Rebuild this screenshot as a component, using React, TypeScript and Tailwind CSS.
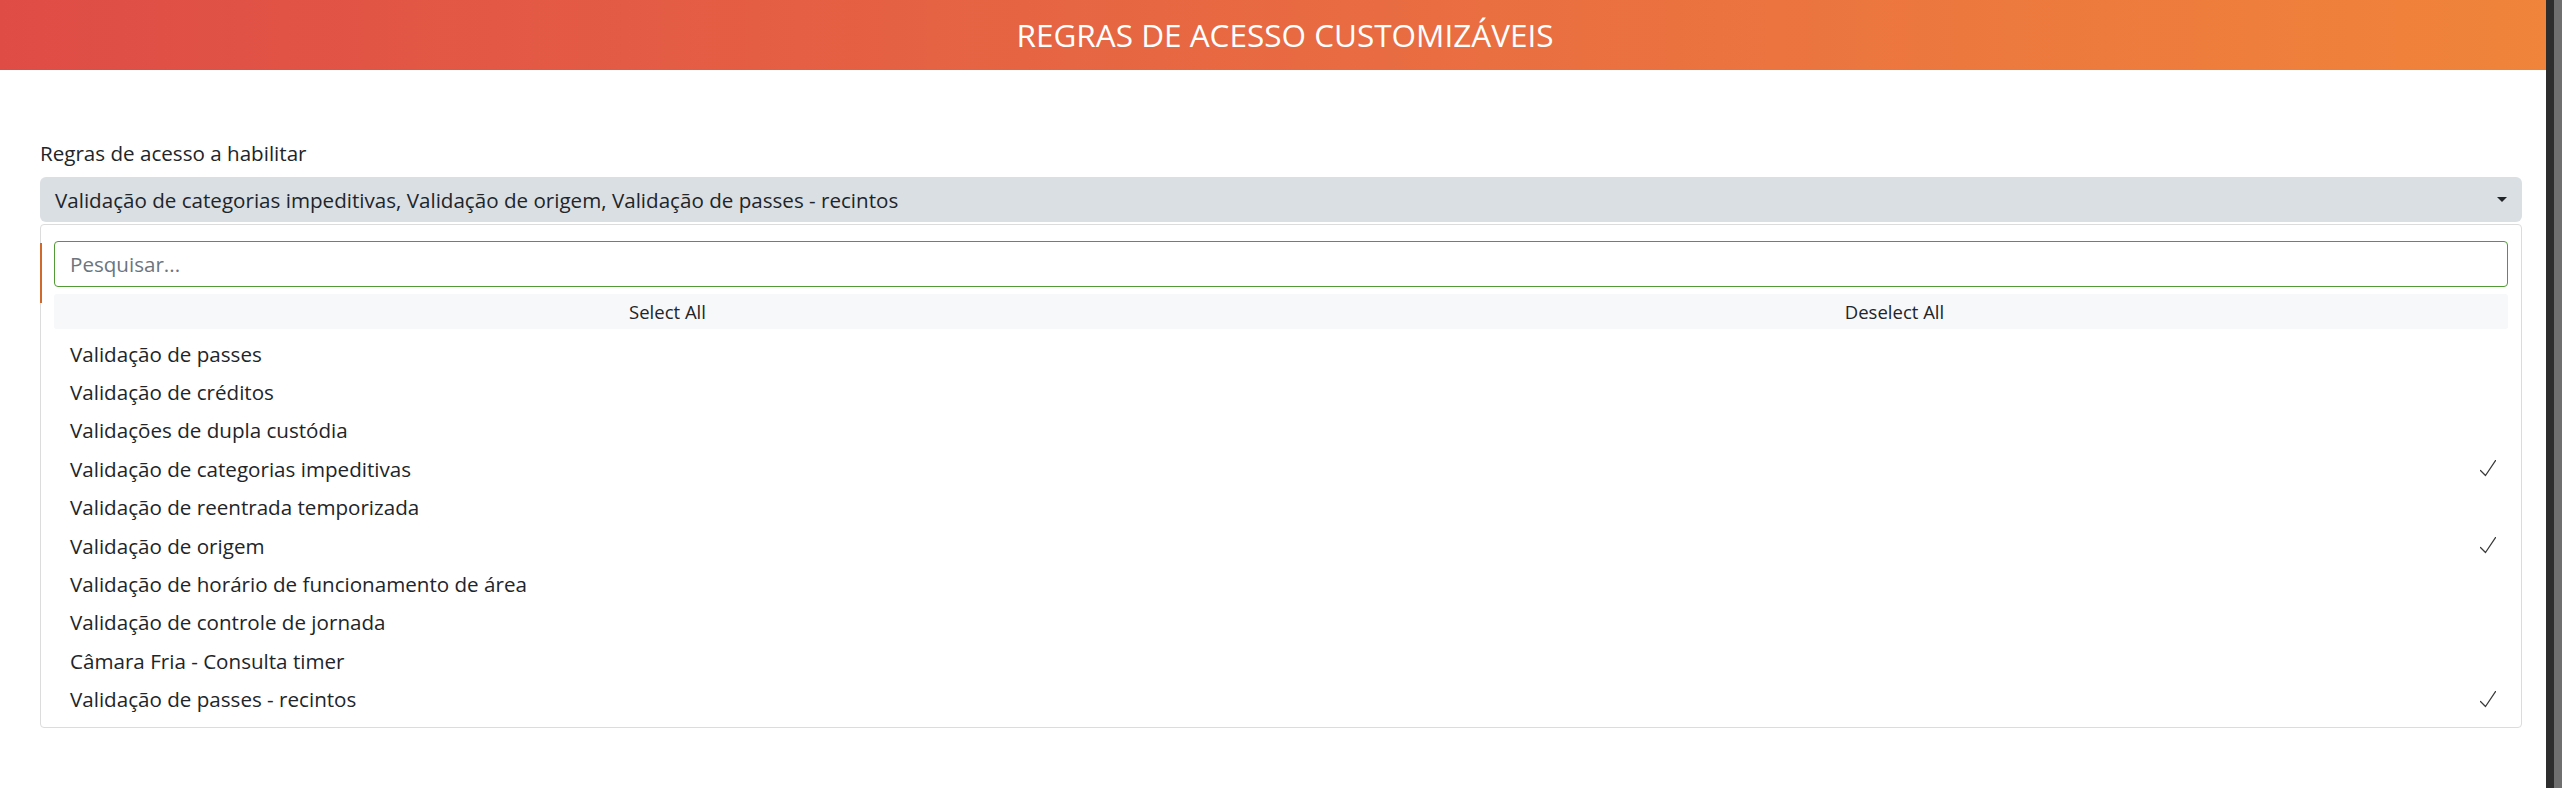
import React from 'react';

const rules = [
  { name: 'Validação de passes', checked: false },
  { name: 'Validação de créditos', checked: false },
  { name: 'Validações de dupla custódia', checked: false },
  { name: 'Validação de categorias impeditivas', checked: true },
  { name: 'Validação de reentrada temporizada', checked: false },
  { name: 'Validação de origem', checked: true },
  { name: 'Validação de horário de funcionamento de área', checked: false },
  { name: 'Validação de controle de jornada', checked: false },
  { name: 'Câmara Fria - Consulta timer', checked: false },
  { name: 'Validação de passes - recintos', checked: true },
];

function CheckMark() {
  return (
    <svg width="16" height="17" viewBox="0 0 16 17" fill="none">
      <polyline points="0.5,10.5 5.5,15.5 15.5,0.5" stroke="#3a3a3a" strokeWidth="1.3" strokeLinecap="round" strokeLinejoin="round" />
    </svg>
  );
}

function RuleRow({ name, checked }: { name: string; checked: boolean }) {
  return (
    <div className="flex h-[38.4px] items-center justify-between pl-[16px] pr-[12px]">
      <span className="text-[20.6px] leading-[30px] text-[#212529]">{name}</span>
      {checked && <CheckMark />}
    </div>
  );
}

export default function App() {
  const selected = rules.filter(r => r.checked).map(r => r.name).join(', ');

  return (
    <div className="flex min-h-[788px] w-full bg-white" style={{ fontFamily: '"Open Sans", "Noto Sans", sans-serif' }}>
      <div className="min-w-0 flex-1">
        {/* Header */}
        <header className="flex h-[70px] items-center justify-center bg-linear-to-r from-[#df4c46] to-[#f0843a] pl-[24px]">
          <h1 className="text-[31.5px] font-normal text-white">REGRAS DE ACESSO CUSTOMIZÁVEIS</h1>
        </header>

        <main className="pl-[40px] pr-[24px] pt-[68px]">
          <label className="mb-[9px] block text-[20.6px] leading-[30px] text-[#212529]">Regras de acesso a habilitar</label>

          {/* Select */}
          <div className="flex h-[45px] items-center justify-between rounded-[6px] bg-[#dadfe3] pl-[15px] pr-[15px]">
            <span className="text-[20.6px] leading-[30px] text-[#212529]">{selected}</span>
            <span className="h-0 w-0 border-x-[5px] border-t-[5px] border-x-transparent border-t-[#212529]" />
          </div>

          {/* Dropdown panel */}
          <div className="relative mt-[2px] rounded-[4px] border border-[#dcdcdc] px-[13px] pb-[8.5px] pt-[16px]">
            <div className="absolute left-[-1px] top-[18px] h-[60px] w-[1.5px] bg-[#cf6a2c]" />
            <input
              className="block h-[46px] w-full rounded-[4px] border border-[#529a36] pl-[15px] text-[20.6px] text-[#212529] outline-none placeholder:text-[#6c757d]"
              placeholder="Pesquisar..."
            />
            <div className="mt-[7px] grid h-[35px] grid-cols-2 rounded-[3px] bg-[#f7f8fa] text-[18.5px] text-[#212529]">
              <button className="flex items-center justify-center">Select All</button>
              <button className="flex items-center justify-center">Deselect All</button>
            </div>
            <div className="mt-[5.5px]">
              {rules.map(r => (
                <RuleRow key={r.name} name={r.name} checked={r.checked} />
              ))}
            </div>
          </div>
        </main>
      </div>

      {/* Window scrollbar strip */}
      <div className="flex w-[16px] shrink-0">
        <div className="w-[8px] bg-[#2d2d2d]" />
        <div className="w-[8px] bg-[#6f6f6f]" />
      </div>
    </div>
  );
}
